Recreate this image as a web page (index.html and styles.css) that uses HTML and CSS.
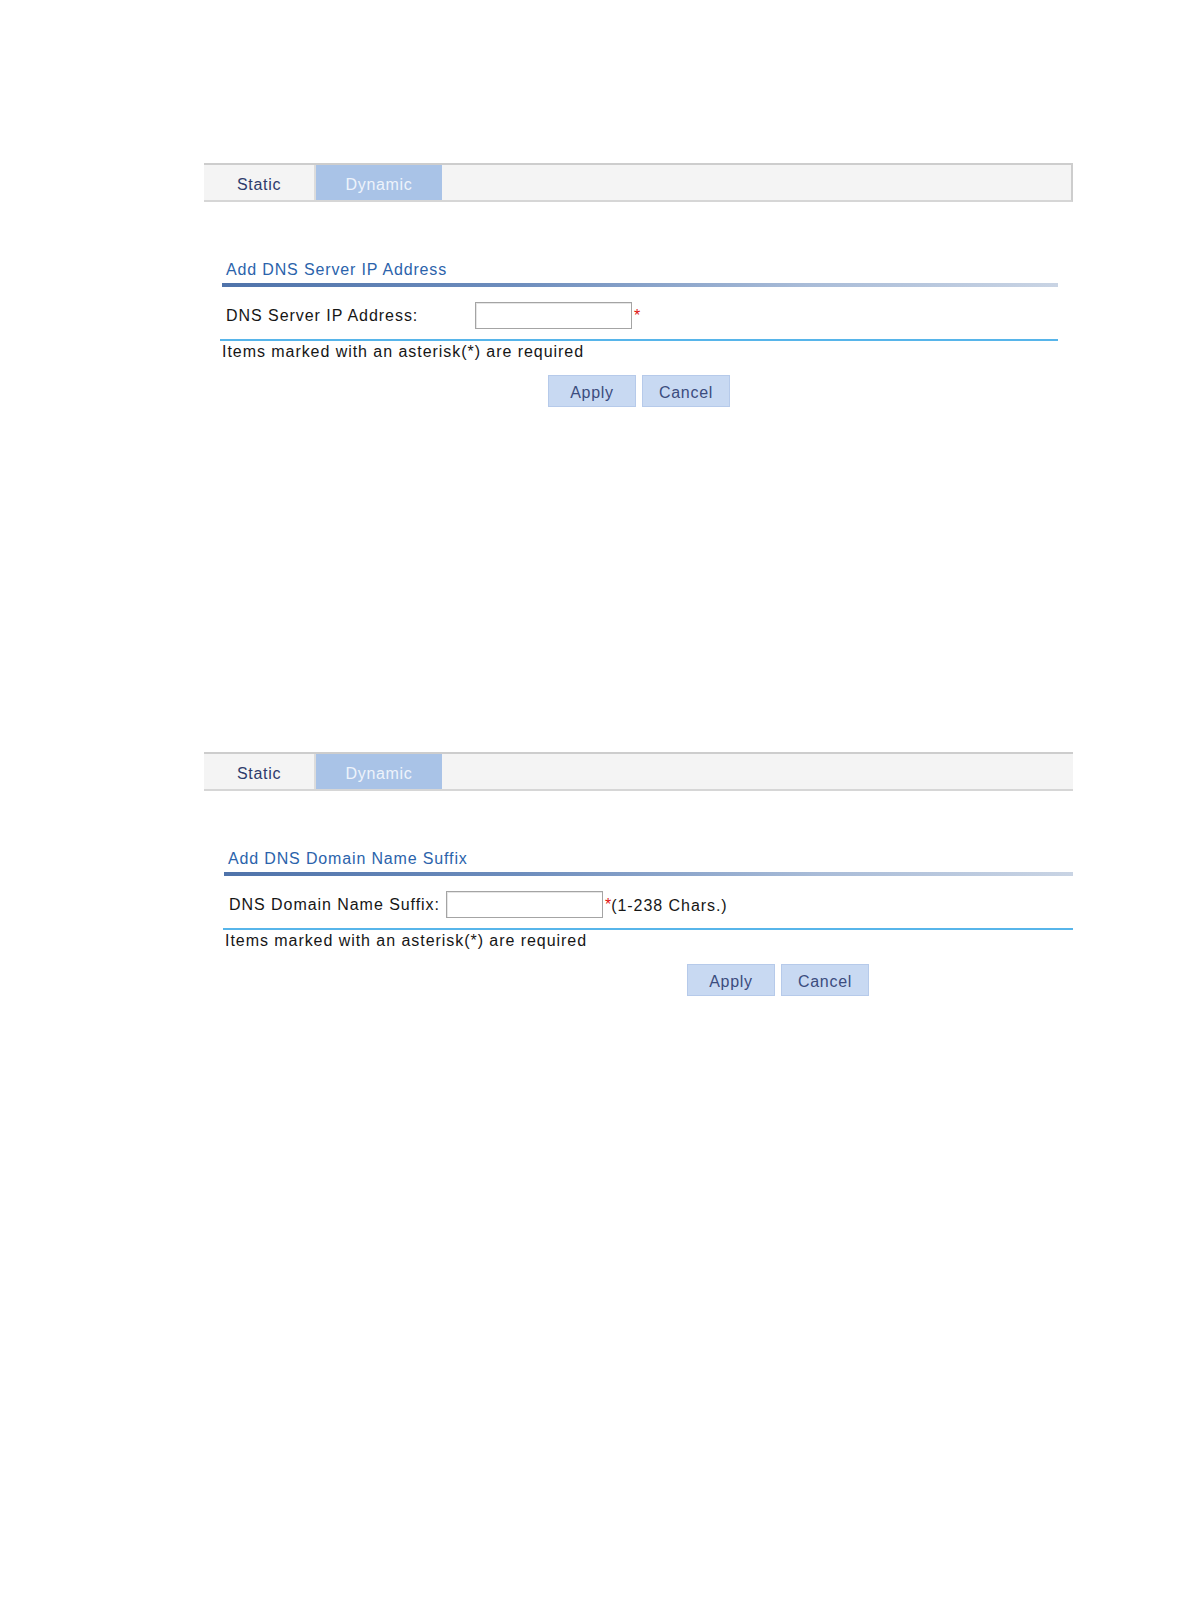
FILE: index.html
```html
<!DOCTYPE html>
<html lang="en">
<head>
<meta charset="utf-8">
<title>DNS</title>
<link rel="stylesheet" href="styles.css">
</head>
<body>
<div class="page">
  <section class="panel panel-ip">
    <div class="tabs">
      <div class="tab">Static</div>
      <div class="tab active">Dynamic</div>
      <div class="tab-fill"></div>
    </div>
    <div class="form">
      <div class="title">Add DNS Server IP Address</div>
      <div class="title-bar"></div>
      <div class="row">
        <span class="label">DNS Server IP Address:</span>
        <span class="input"></span>
        <span class="req">*</span>
      </div>
      <div class="note">Items marked with an asterisk(*) are required</div>
      <div class="actions">
        <button class="btn">Apply</button>
        <button class="btn">Cancel</button>
      </div>
    </div>
  </section>

  <section class="panel panel-suffix">
    <div class="tabs">
      <div class="tab">Static</div>
      <div class="tab active">Dynamic</div>
      <div class="tab-fill"></div>
    </div>
    <div class="form">
      <div class="title">Add DNS Domain Name Suffix</div>
      <div class="title-bar"></div>
      <div class="row">
        <span class="label">DNS Domain Name Suffix:</span>
        <span class="input"></span>
        <span class="req">*</span><span class="hint">(1-238 Chars.)</span>
      </div>
      <div class="note">Items marked with an asterisk(*) are required</div>
      <div class="actions">
        <button class="btn">Apply</button>
        <button class="btn">Cancel</button>
      </div>
    </div>
  </section>
</div>
</body>
</html>
```

FILE: styles.css
```css
html, body {
  margin: 0;
  padding: 0;
  background: #ffffff;
}

body {
  font-family: "Liberation Sans", Arial, sans-serif;
  font-size: 16px;
  letter-spacing: 0.95px;
  color: #161616;
}

.page {
  padding: 163px 0 0 204px;
  width: 869px;
}

.panel-suffix {
  margin-top: 345px;
}

/* tabs */
.tabs {
  display: flex;
  height: 35px;
  background: #f4f4f4;
  border-top: 2px solid #cdcdcd;
  border-bottom: 2px solid #d6d6d6;
}

.panel-ip .tabs {
  border-right: 2px solid #cdcdcd;
}

.tab {
  width: 112px;
  display: flex;
  align-items: center;
  justify-content: center;
  color: #2e3b6c;
  border-right: 2px solid #dcdcdc;
  padding-top: 5px;
  box-sizing: border-box;
  letter-spacing: 0.7px;
}

.tab.active {
  width: 126px;
  background: #a9c3e7;
  color: #eef3fb;
  border-right: none;
}

.tab-fill {
  flex: 1;
}

/* form */
.form {
  display: flex;
  flex-direction: column;
}

.panel-ip .form {
  margin-left: 16px;
  width: 838px;
}

.panel-suffix .form {
  margin-left: 19px;
  width: 850px;
}

.title {
  margin-top: 58px;
  line-height: 20px;
  padding-left: 6px;
  color: #2b63ab;
  letter-spacing: 0.85px;
}

.panel-suffix .title {
  padding-left: 5px;
}

.title-bar {
  margin: 3px 0 0 2px;
  height: 4px;
  background: linear-gradient(to right, #4f73aa 0%, #6d8dbd 35%, #a9bcd8 70%, #c9d4e4 100%);
}

.panel-suffix .title-bar {
  margin-left: 1px;
}

.row {
  display: flex;
  align-items: center;
  height: 27px;
  padding: 15px 0 10px 6px;
  border-bottom: 2px solid #57b5ea;
  line-height: 27px;
}

.panel-ip .label {
  width: 249px;
}

.panel-suffix .label {
  margin-right: 6px;
}

.input {
  display: block;
  width: 155px;
  height: 25px;
  border: 1px solid #a4a4a4;
  background: #ffffff;
  box-shadow: inset 1px 1px 0 #e6e6e6;
}

.req {
  color: #e01010;
  margin-left: 2px;
  font-size: 16px;
  letter-spacing: 0;
}

.hint {
  padding-top: 2px;
  line-height: 25px;
}

.note {
  line-height: 20px;
  padding: 1px 0 0 2px;
}

.actions {
  display: flex;
  gap: 6px;
  margin-top: 13px;
  justify-content: center;
}

.panel-suffix .actions {
  justify-content: flex-start;
  padding-left: 464px;
}

.btn {
  width: 88px;
  height: 32px;
  margin: 0;
  padding: 4px 0 0;
  border: 1px solid #b6caea;
  background: #c8d9f2;
  color: #3b4c7e;
  font-family: "Liberation Sans", Arial, sans-serif;
  font-size: 16px;
  letter-spacing: 0.7px;
}
```
